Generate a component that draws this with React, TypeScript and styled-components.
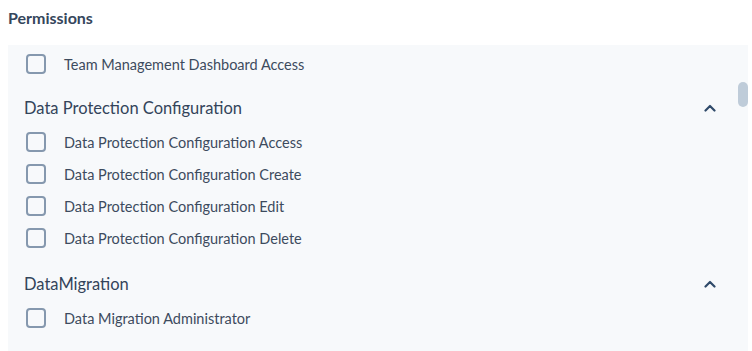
import React from "react";
import styled, { createGlobalStyle } from "styled-components";

const Global = createGlobalStyle`
  html, body { margin: 0; padding: 0; background: #ffffff; }
  body { padding: 8px; font-family: Lato, "Open Sans", sans-serif; overflow: hidden; }
`;

const Title = styled.h3`
  margin: 0;
  height: 37px;
  box-sizing: border-box;
  padding-top: 0;
  font-size: 16px;
  font-weight: 700;
  color: #35465c;
  line-height: 20px;
`;

const Panel = styled.div`
  position: relative;
  width: 740px;
  height: 306px;
  background: #f7f9fb;
  padding: 3px 0 0 0;
  box-sizing: border-box;
  overflow: hidden;
`;

const Thumb = styled.div`
  position: absolute;
  right: 0;
  top: 37px;
  width: 10px;
  height: 25px;
  border-radius: 5px;
  background: #bfccd9;
`;

const Section = styled.div<{ $gap: number }>`
  padding-top: ${(p) => p.$gap}px;
`;

const Heading = styled.div`
  display: flex;
  align-items: center;
  justify-content: space-between;
  height: 28px;
  padding: 0 32px 0 16px;
  margin-bottom: 4px;
  font-size: 16.5px;
  color: #33445a;
`;

const Row = styled.label`
  display: flex;
  align-items: center;
  height: 32px;
  padding-left: 18px;
  gap: 18px;
  font-size: 14.5px;
  color: #3d4b5e;
`;

const Box = styled.span`
  width: 20px;
  height: 20px;
  box-sizing: border-box;
  border: 2px solid #8598ae;
  border-radius: 4px;
  background: #f7f9fb;
  flex-shrink: 0;
`;

const Chevron = () => (
  <svg width="12" height="8" viewBox="0 0 12 8" fill="none">
    <path d="M1.5 6.5 L6 2 L10.5 6.5" stroke="#2f4a6a" strokeWidth="2.2" strokeLinecap="round" strokeLinejoin="round" />
  </svg>
);

const Item = ({ text }: { text: string }) => (
  <Row>
    <Box />
    <span>{text}</span>
  </Row>
);

export default function App() {
  return (
    <>
      <Global />
      <Title>Permissions</Title>
      <Panel>
        <Item text="Team Management Dashboard Access" />
        <Section $gap={14}>
          <Heading>
            <span>Data Protection Configuration</span>
            <Chevron />
          </Heading>
          <Item text="Data Protection Configuration Access" />
          <Item text="Data Protection Configuration Create" />
          <Item text="Data Protection Configuration Edit" />
          <Item text="Data Protection Configuration Delete" />
        </Section>
        <Section $gap={16}>
          <Heading>
            <span>DataMigration</span>
            <Chevron />
          </Heading>
          <Item text="Data Migration Administrator" />
        </Section>
        <Thumb />
      </Panel>
    </>
  );
}
